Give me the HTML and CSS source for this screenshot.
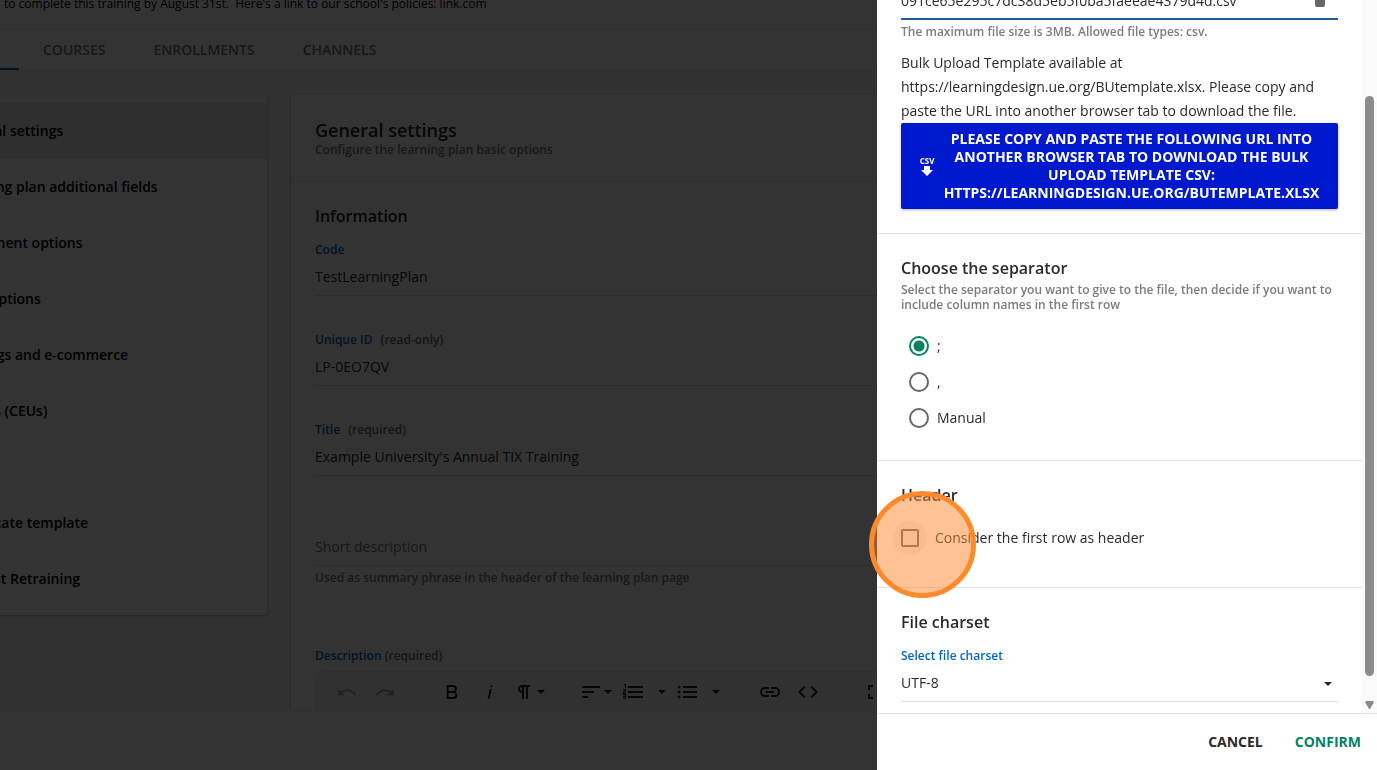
FILE: index.html
```
<!DOCTYPE html>
<html lang="en">
<head>
<meta charset="utf-8">
<title>Learning plan – bulk enrollment</title>
<link rel="stylesheet" href="styles.css">
</head>
<body>
<div class="page">
  <p class="notice">to complete this training by August 31st.&nbsp; Here's a link to our school's policies: link.com</p>
  <nav class="tabs">
    <button class="tab tab-active" type="button" aria-label="Properties"></button>
    <button class="tab" type="button">COURSES</button>
    <button class="tab" type="button">ENROLLMENTS</button>
    <button class="tab" type="button">CHANNELS</button>
  </nav>
  <div class="columns">
    <nav class="menu">
      <a class="menu-item menu-current" href="#general">General settings</a>
      <a class="menu-item" href="#fields">Learning plan additional fields</a>
      <a class="menu-item" href="#enrollment">Enrollment options</a>
      <a class="menu-item" href="#options">Time options</a>
      <a class="menu-item" href="#commerce">Earnings and e-commerce</a>
      <a class="menu-item" href="#ceus">Credits (CEUs)</a>
      <a class="menu-item" href="#time">Time</a>
      <a class="menu-item" href="#certificate">Certificate template</a>
      <a class="menu-item" href="#retraining">Student Retraining</a>
    </nav>
    <main class="card">
      <header class="card-head">
        <h1 class="card-title">General settings</h1>
        <p class="note">Configure the learning plan basic options</p>
      </header>
      <div class="form">
        <h2 class="heading">Information</h2>
        <div class="field">
          <label class="label" for="code">Code</label>
          <input class="input" id="code" value="TestLearningPlan">
        </div>
        <div class="field">
          <label class="label" for="uid">Unique ID <span class="flag">(read-only)</span></label>
          <input class="input" id="uid" value="LP-0EO7QV" readonly>
        </div>
        <div class="field">
          <label class="label" for="title">Title <span class="flag">(required)</span></label>
          <input class="input" id="title" value="Example University's Annual TIX Training">
        </div>
        <div class="field field-short">
          <input class="input" id="short" placeholder="Short description" aria-label="Short description">
          <p class="hint">Used as summary phrase in the header of the learning plan page</p>
        </div>
        <p class="label editor-label">Description <span>(required)</span></p>
        <div class="toolbar">
          <div class="tools">
            <button class="tool faded" type="button" aria-label="Undo"><svg viewBox="0 0 38 38"><path transform="translate(7 7)" d="M10.4,9.4c-1.7,.3-3.2,.9-4.6,2L3,8.5v7h7L7.3,12.7c3.7-2.6,8.8-1.8,11.5,1.9c.2,.3,.4,.5,.5,.8l1.8-.9C18.9,10.8,14.7,8.7,10.4,9.4z"/></svg></button>
            <button class="tool faded" type="button" aria-label="Redo"><svg viewBox="0 0 38 38"><path transform="translate(7 7)" d="M13.6,9.4c1.7,.3,3.2,.9,4.6,2L21,8.5v7h-7l2.7-2.7C13,10.1,7.9,11,5.3,14.7c-.2,.3-.4,.5-.5,.8L3,14.6C5.1,10.8,9.3,8.7,13.6,9.4z"/></svg></button>
          </div>
          <div class="tools">
            <button class="tool" type="button" aria-label="Bold"><svg viewBox="0 0 38 38"><path transform="translate(7 7)" d="M15.25,11.8h0A3.68,3.68,0,0,0,17,9a3.93,3.93,0,0,0-3.86-4H6.65V19h7a3.74,3.74,0,0,0,3.7-3.78V15.1A3.64,3.64,0,0,0,15.25,11.8ZM8.65,7h4.2a2.09,2.09,0,0,1,2,1.3,2.09,2.09,0,0,1-1.37,2.61,2.23,2.23,0,0,1-.63.09H8.65Zm4.6,10H8.65V13h4.6a2.09,2.09,0,0,1,2,1.3,2.09,2.09,0,0,1-1.37,2.61A2.23,2.23,0,0,1,13.25,17Z"/></svg></button>
            <button class="tool" type="button" aria-label="Italic"><svg viewBox="0 0 38 38"><path transform="translate(7 7)" d="M11.76,9h2l-2.2,10h-2Zm1.68-4a1,1,0,1,0,1,1,1,1,0,0,0-1-1Z"/></svg></button>
            <button class="tool" type="button" aria-label="Paragraph format"><svg viewBox="0 0 38 38"><path transform="translate(3 7)" d="M10.15,5A4.11,4.11,0,0,0,6.08,8.18,4,4,0,0,0,10,13v6h2V7h2V19h2V7h2V5ZM8,9a2,2,0,0,1,2-2v4A2,2,0,0,1,8,9Z"/><path d="M28 17h8l-4 4z"/></svg></button>
          </div>
          <div class="tools">
            <button class="tool" type="button" aria-label="Align"><svg viewBox="0 0 38 38"><path d="M6 13h18v2H6zM6 18h12v2H6zM6 23h6v2H6zM28 17h8l-4 4z"/></svg></button>
            <button class="tool" type="button" aria-label="Numbered list"><svg viewBox="0 0 38 38"><path d="M14 13h15v2H14zM14 18h15v2H14zM14 23h15v2H14z"/><path d="M10 12h2v4h-1v-3h-1zM9 17h3v2l-2 2h2v1H9v-2l2-2H9zM9 22h3v5H9v-1h2v-1H9v-1h2v-1H9z" transform="translate(0 -1)"/></svg></button>
            <button class="tool tool-drop" type="button" aria-label="Numbered list styles"><svg viewBox="0 0 16 38"><path d="M6 17h8l-4 4z"/></svg></button>
            <button class="tool" type="button" aria-label="Bulleted list"><svg viewBox="0 0 38 38"><path d="M15 13h14v2H15zM15 18h14v2H15zM15 23h14v2H15z"/><circle cx="11" cy="14" r="1.500"/><circle cx="11" cy="19" r="1.500"/><circle cx="11" cy="24" r="1.500"/></svg></button>
            <button class="tool tool-drop" type="button" aria-label="Bulleted list styles"><svg viewBox="0 0 16 38"><path d="M6 17h8l-4 4z"/></svg></button>
          </div>
          <div class="tools">
            <button class="tool" type="button" aria-label="Insert link"><svg viewBox="0 0 38 38"><path transform="translate(7 7)" d="M3.900 12c0-1.700 1.400-3.100 3.100-3.100h4V7H7a5 5 0 0 0 0 10h4v-1.900H7A3.100 3.100 0 0 1 3.900 12zM8 13h8v-2H8zm9-6h-4v1.900h4a3.100 3.100 0 0 1 0 6.200h-4V17h4a5 5 0 0 0 0-10z"/></svg></button>
            <button class="tool" type="button" aria-label="Code view"><svg viewBox="0 0 38 38"><path transform="translate(7 7)" d="M9.4,16.6,4.8,12,9.4,7.4,8,6,2,12l6,6Zm5.2,0L19.2,12,14.6,7.4,16,6l6,6-6,6Z"/></svg></button>
          </div>
          <div class="tools">
            <button class="tool" type="button" aria-label="Fullscreen"><svg viewBox="0 0 38 38"><path transform="translate(7 7)" d="M7,14H5v5h5V17H7ZM5,10H7V7h3V5H5Zm12,7H14v2h5V14H17ZM14,5V7h3v3h2V5Z"/></svg></button>
          </div>
        </div>
      </div>
    </main>
  </div>
  <footer class="page-foot"></footer>
</div>

<div class="overlay">
  <aside class="drawer" aria-label="Bulk upload">
    <div class="drawer-main">
      <div class="drawer-body">
        <section class="block block-file">
          <div class="file">
            <span>091ce65e295c7dc38d5eb5f0ba5faeeae4379d4d.csv</span>
            <button class="file-remove" type="button" aria-label="Remove file"><svg viewBox="0 0 20 20"><path d="M4 2h12v2H4zM5 5h10v11a2 2 0 0 1-2 2H7a2 2 0 0 1-2-2z"/></svg></button>
          </div>
          <p class="hint">The maximum file size is 3MB. Allowed file types: csv.</p>
          <p class="text">Bulk Upload Template available at https://learningdesign.ue.org/BUtemplate.xlsx. Please copy and paste the URL into another browser tab to download the file.</p>
          <button class="download" type="button">
            <span class="csv"><span>CSV</span><svg viewBox="0 0 12 10"><path d="M3 0h6v4h3L6 10 0 4h3z"/></svg></span>
            <span class="download-text">PLEASE COPY AND PASTE THE FOLLOWING URL INTO ANOTHER BROWSER TAB TO DOWNLOAD THE BULK UPLOAD TEMPLATE CSV: HTTPS://LEARNINGDESIGN.UE.ORG/BUTEMPLATE.XLSX</span>
          </button>
        </section>
        <section class="block">
          <h2 class="heading">Choose the separator</h2>
          <p class="note">Select the separator you want to give to the file, then decide if you want to include column names in the first row</p>
          <div class="radios">
            <label class="choice"><input class="radio" type="radio" name="sep" checked>;</label>
            <label class="choice"><input class="radio" type="radio" name="sep">,</label>
            <label class="choice"><input class="radio" type="radio" name="sep">Manual</label>
          </div>
        </section>
        <section class="block block-header">
          <h2 class="heading">Header</h2>
          <div class="check-row">
            <span class="check-halo"><input class="check" type="checkbox" id="first-row"><span class="marker"></span></span>
            <label for="first-row">Consider the first row as header</label>
          </div>
        </section>
        <section class="block">
          <h2 class="heading">File charset</h2>
          <label class="label charset-label" for="charset">Select file charset</label>
          <div class="select-box">
            <select class="input select" id="charset"><option>UTF-8</option></select>
            <svg class="caret" viewBox="0 0 8 4"><path d="M0 0h8L4 4z"/></svg>
          </div>
        </section>
      </div>
      <div class="scroll">
        <span class="thumb"></span>
        <svg class="scroll-arrow" viewBox="0 0 9 8"><path d="M1 0h7l1 1-4 7H4L0 1z"/></svg>
      </div>
    </div>
    <footer class="drawer-foot">
      <button class="action" type="button">CANCEL</button>
      <button class="action confirm" type="button">CONFIRM</button>
    </footer>
  </aside>
</div>
</body>
</html>
```

FILE: styles.css
```
* { box-sizing: border-box; }
html, body { height: 100%; }
body {
  margin: 0;
  overflow: hidden;
  font: 14px/20px "Open Sans", "Noto Sans", sans-serif;
  color: #2a2a2a;
  background: #fff;
}
h1, h2, p { margin: 0; }
button, input, select { font: inherit; color: inherit; background: none; border: 0; padding: 0; margin: 0; }
svg { display: block; fill: currentColor; }

/* Page */
.page {
  display: flex;
  flex-direction: column;
  height: 100vh;
  margin-left: -73px;
}
.notice {
  flex: none;
  height: 36px;
  margin-top: -6px;
  padding-left: 77px;
  border-bottom: 1px solid #e8e8e8;
  font-size: 12px;
  font-weight: 500;
  white-space: nowrap;
  color: #000;
}
.tabs { display: flex; flex: none; height: 41px; border-bottom: 1px solid #e8e8e8; }
.tab { padding: 2px 24px 0; font-weight: 600; color: #777; border-bottom: 2px solid transparent; }
.tab-active { width: 92px; border-bottom-color: #0465ac; }
.columns {
  display: flex;
  flex: 1;
  gap: 24px;
  min-height: 0;
  padding-top: 24px;
  overflow: hidden;
  background: #f5f5f5;
}
.menu {
  display: flex;
  flex-direction: column;
  flex: none;
  align-self: flex-start;
  width: 340px;
  padding: 8px 0;
  background: #fff;
  box-shadow: 0 1px 3px rgba(0, 0, 0, .3);
}
.menu-item {
  padding: 18px 26px;
  font-weight: 600;
  color: #000;
  text-decoration: none;
}
.menu-current { background: #ececec; }
.card { flex: 1; background: #fff; box-shadow: 0 1px 3px rgba(0, 0, 0, .4); }
.card-head { padding: 23px 24px 24px; border-bottom: 1px solid #e4e4e4; }
.card-title { font-size: 18px; line-height: 24px; font-weight: 600; }
.note { font-size: 12px; line-height: 15px; font-weight: 600; color: #7c7c7c; }
.form { padding: 24px 0 0 24px; }
.heading { font-size: 16px; line-height: 20px; font-weight: 600; }
.form .heading { margin-bottom: 14px; }
.field { display: flex; flex-direction: column; height: 90px; }
.label { font-size: 12px; line-height: 20px; font-weight: 600; color: #0465c0; }
.flag { margin-left: 5px; }
.label span { color: #6c6c6c; }
.input { height: 36px; width: 100%; padding-bottom: 2px; border-bottom: 1px solid #ddd; border-radius: 0; outline: 0; }
.input::placeholder { color: #757575; opacity: 1; }
.field-short { padding-top: 20px; height: 136px; }
.hint { font-size: 12px; line-height: 20px; font-weight: 600; color: #7c7c7c; }
.field-short .hint { margin-top: 2px; }
.editor-label { margin-bottom: 5px; }
.toolbar {
  display: flex;
  gap: 29px;
  height: 60px;
  padding: 1px 12px;
  border: 1px solid #e4e4e4;
  border-radius: 10px 10px 0 0;
  background: #f5f5f5;
}
.tools { display: flex; flex: none; }
.tool { width: 38px; height: 38px; color: #222; }
.tool-drop { width: 16px; }
.faded { color: #aaa; }
.page-foot { flex: none; height: 60px; background: #fff; border-top: 1px solid #e8e8e8; }

/* Drawer */
.overlay {
  position: fixed;
  inset: 0;
  display: flex;
  justify-content: flex-end;
  background: rgba(0, 0, 0, .8);
}
.drawer { display: flex; flex-direction: column; width: 500px; background: #fff; }
.drawer-main { display: flex; flex: 1; min-height: 0; }
.drawer-body { flex: 1; margin-top: -16px; }
.block { padding: 24px; border-bottom: 1px solid #e0e0e0; }
.block:last-child { border: 0; }
.block-file { padding-top: 0; }
.file {
  display: flex;
  justify-content: space-between;
  height: 36px;
  padding: 7px 8px 0 0;
  border-bottom: 2px solid #1f5f99;
}
.file-remove { width: 20px; height: 20px; margin-top: -2px; color: #666; }
.block-file .hint { margin-top: 2px; }
.text { margin-top: 9px; line-height: 24px; }
.download {
  display: flex;
  align-items: center;
  width: 100%;
  padding: 7px 18px 7px 16px;
  gap: 6px;
  border-radius: 2px;
  color: #fff;
  background: #0019cf;
  box-shadow: 0 1px 3px rgba(0, 0, 0, .3);
  font-weight: 700;
  line-height: 18px;
}
.csv {
  display: flex;
  flex: none;
  flex-direction: column;
  align-items: center;
  width: 20px;
  font-size: 8px;
  line-height: 10px;
}
.csv svg { width: 12px; height: 10px; }
.download-text { flex: 1; text-align: center; }
.block .note { margin-top: 4px; }
.radios { display: flex; flex-direction: column; margin-top: 16px; padding-left: 8px; }
.choice { display: flex; align-items: center; gap: 8px; height: 36px; }
.radio, .check { appearance: none; flex: none; border: 2px solid #666; }
.radio { width: 20px; height: 20px; border-radius: 50%; }
.radio:checked { border-color: #048262; background: radial-gradient(#048262 5px, transparent 6px); }
.block-header { padding-bottom: 32px; }
.check-row { display: flex; align-items: center; gap: 8px; height: 34px; margin: 16px 0 0 -8px; }
.check-halo {
  position: relative;
  display: grid;
  place-items: center;
  width: 34px;
  height: 34px;
  border-radius: 50%;
  background: #f2f2f2;
}
.check { width: 18px; height: 18px; border-radius: 2px; }
.marker {
  position: absolute;
  top: -30px;
  left: -24px;
  width: 107px;
  height: 107px;
  border: 5px solid #ff8a2c;
  border-radius: 50%;
  background: rgba(255, 133, 43, .5);
  pointer-events: none;
}
.charset-label { display: block; margin-top: 14px; }
.select-box { display: grid; align-items: center; }
.select-box > * { grid-area: 1 / 1; }
.select { appearance: none; }
.caret { justify-self: end; width: 8px; height: 4px; margin-right: 6px; pointer-events: none; }
.scroll {
  display: flex;
  flex: none;
  flex-direction: column;
  align-items: center;
  width: 15px;
  padding: 96px 0 4px;
  background: #fafafa;
}
.thumb { flex: 1; width: 9px; margin-bottom: 25px; border-radius: 5px; background: #8b8b8b; }
.scroll-arrow { width: 9px; height: 8px; color: #8b8b8b; }
.drawer-foot {
  display: flex;
  flex: none;
  align-items: center;
  justify-content: flex-end;
  gap: 32px;
  height: 57px;
  padding-right: 16px;
  border-top: 1px solid #e0e0e0;
  background: #fff;
}
.action { font-weight: 700; }
.confirm { color: #048262; }
```
